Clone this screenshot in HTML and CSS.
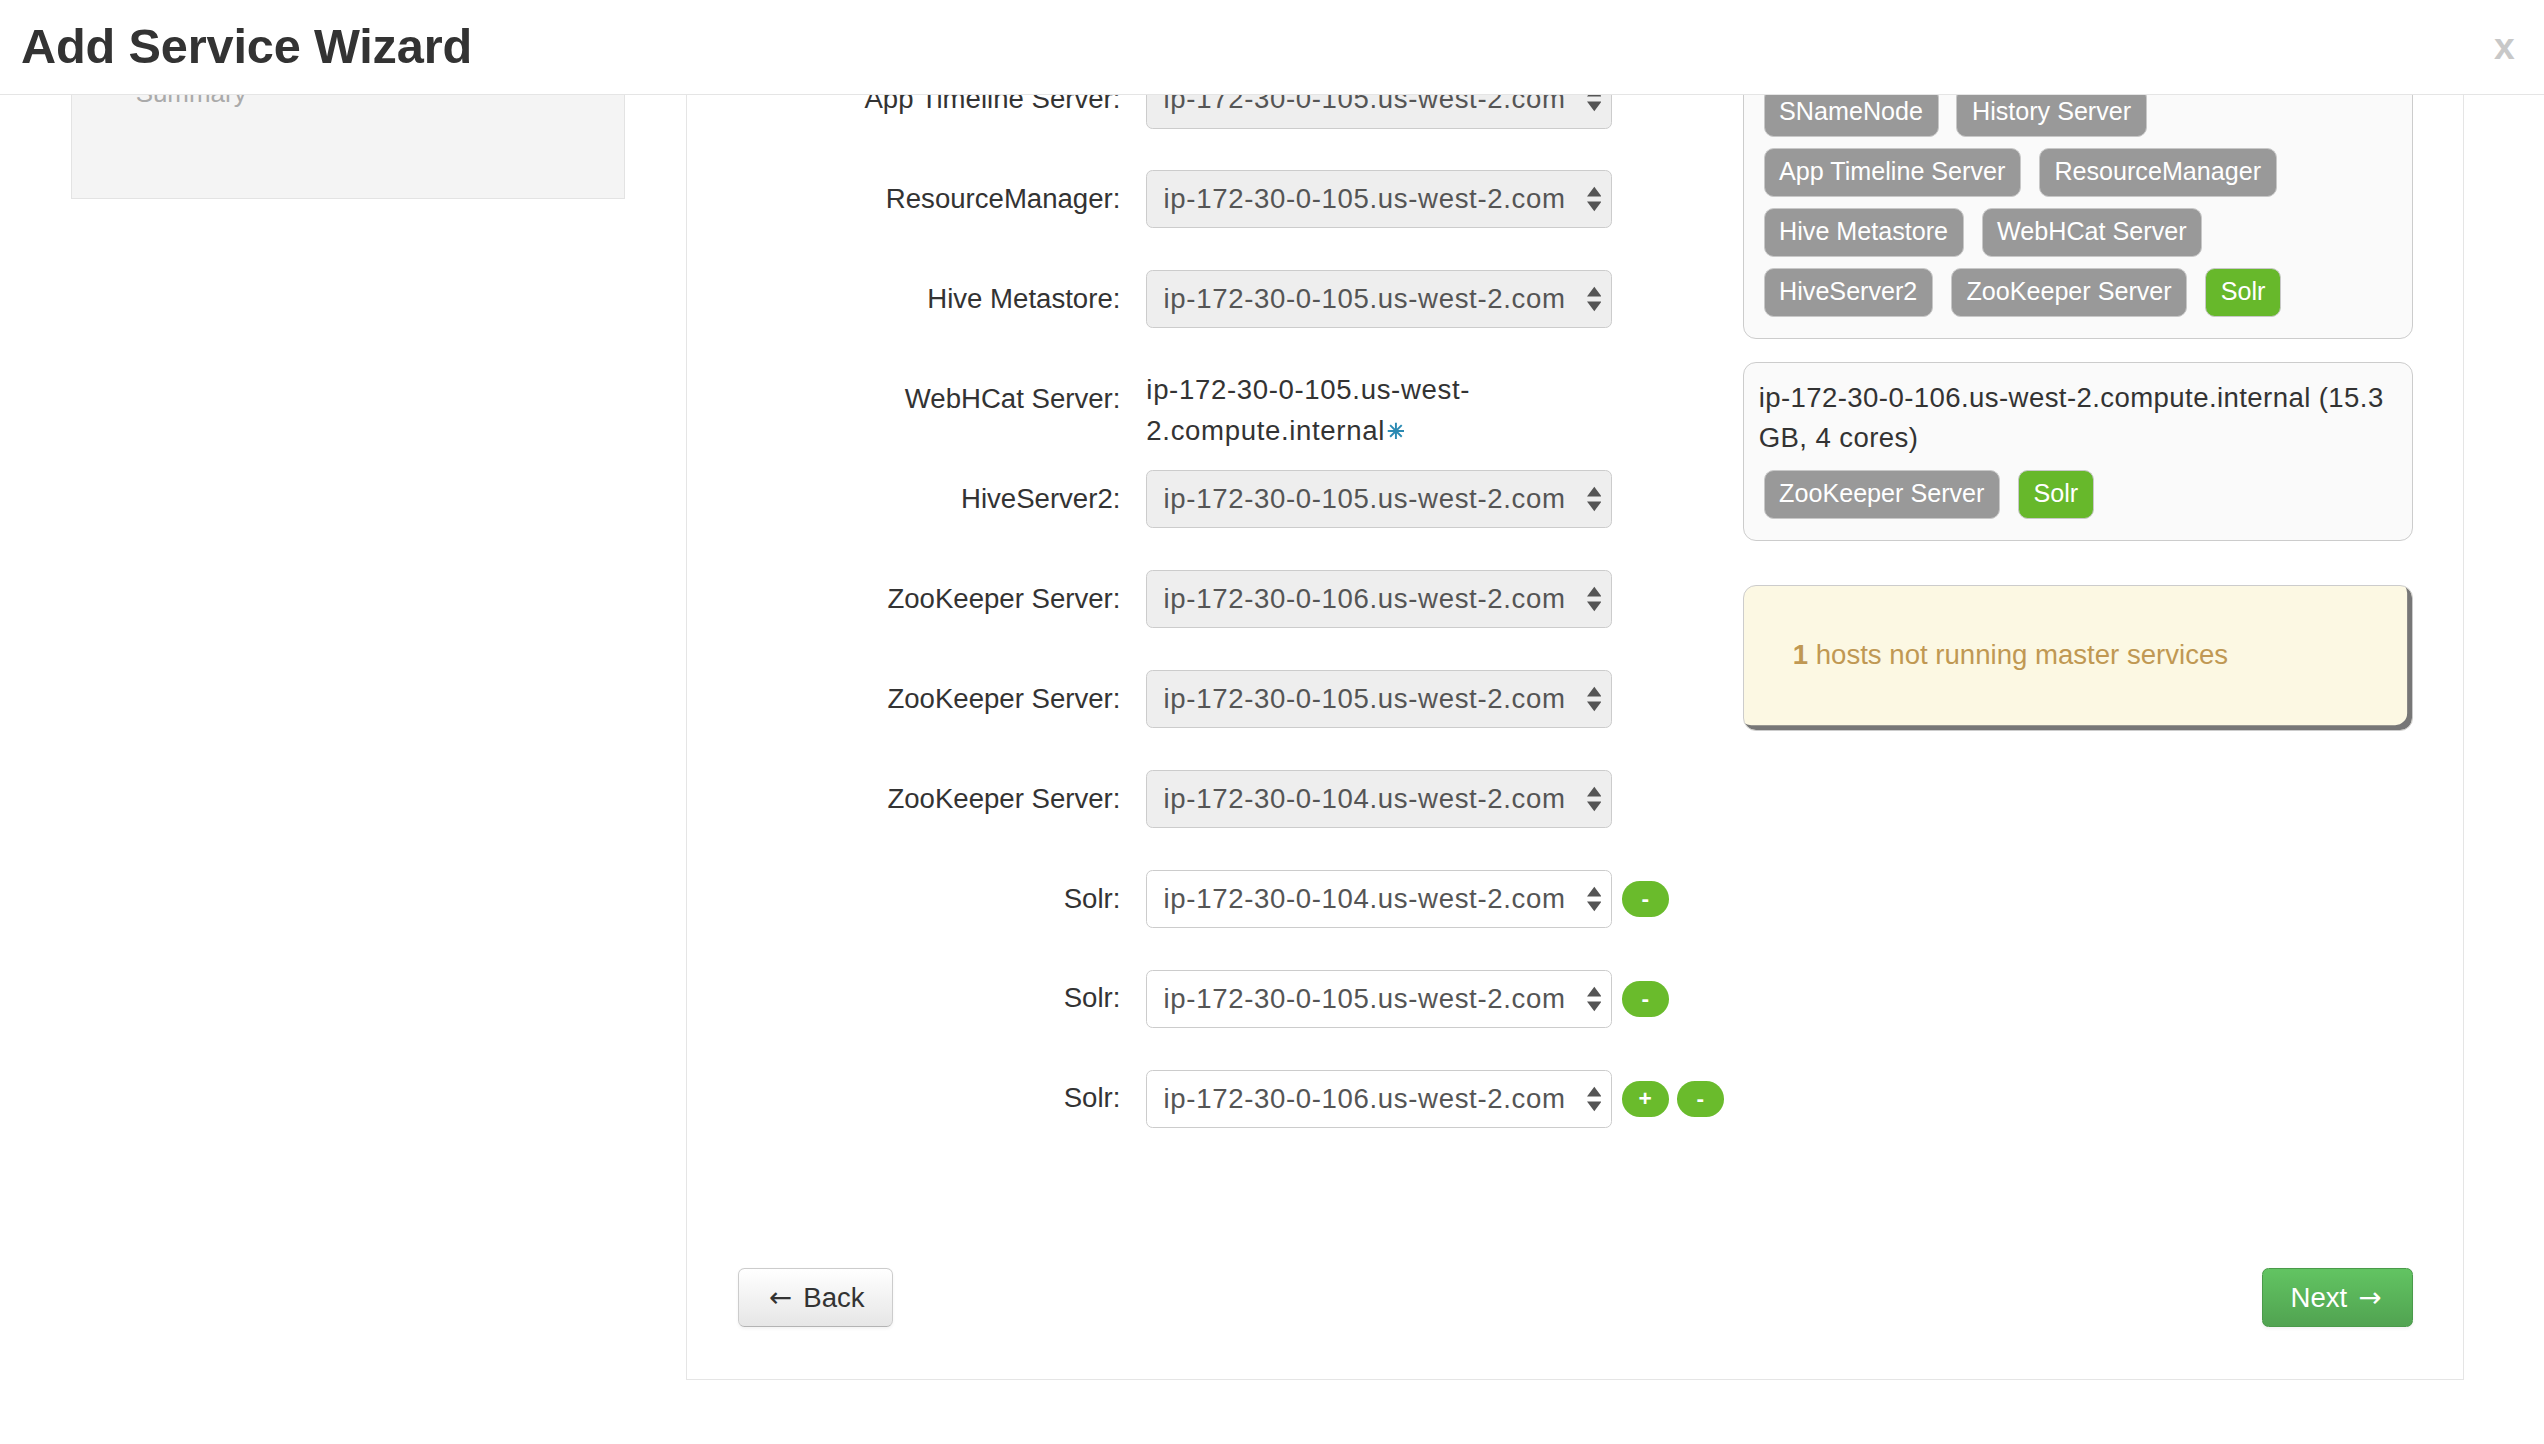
FILE: index.html
```html
<!DOCTYPE html>
<html lang="en">
<head>
    <meta charset="UTF-8">
    <meta name="viewport" content="width=device-width, initial-scale=1.0">
    <title>Add Service Wizard</title>
    <link rel="stylesheet" href="styles.css">
</head>
<body>
    <div class="modal">
        <div class="modal-header">
            <h3>Add Service Wizard</h3>
            <span class="close">x</span>
        </div>
        <div class="modal-body">
            <div class="wizard">
                <div class="wizard-nav">
                    <ul>
                        <li>Choose Services</li>
                        <li>Assign Masters</li>
                        <li>Assign Slaves and Clients</li>
                        <li>Customize Services</li>
                        <li>Review</li>
                        <li>Install, Start and Test</li>
                        <li>Configure</li>
                        <li>Summary</li>
                    </ul>
                </div>

                <div class="wizard-step">
                    <div class="step-cols">
                        <div class="masters">
                            <div class="row">
                                <label>NameNode:</label>
                                <div class="select"><span>ip-172-30-0-104.us-west-2.com</span><svg class="caret" viewBox="0 0 9 16"><path d="M0 6.5L4.5 0.5L9 6.5Z M0 9.5L4.5 15.5L9 9.5Z"/></svg></div>
                            </div>
                            <div class="row">
                                <label>SNameNode:</label>
                                <div class="select"><span>ip-172-30-0-105.us-west-2.com</span><svg class="caret" viewBox="0 0 9 16"><path d="M0 6.5L4.5 0.5L9 6.5Z M0 9.5L4.5 15.5L9 9.5Z"/></svg></div>
                            </div>
                            <div class="row">
                                <label>History Server:</label>
                                <div class="select"><span>ip-172-30-0-105.us-west-2.com</span><svg class="caret" viewBox="0 0 9 16"><path d="M0 6.5L4.5 0.5L9 6.5Z M0 9.5L4.5 15.5L9 9.5Z"/></svg></div>
                            </div>
                            <div class="row">
                                <label>App Timeline Server:</label>
                                <div class="select"><span>ip-172-30-0-105.us-west-2.com</span><svg class="caret" viewBox="0 0 9 16"><path d="M0 6.5L4.5 0.5L9 6.5Z M0 9.5L4.5 15.5L9 9.5Z"/></svg></div>
                            </div>
                            <div class="row">
                                <label>ResourceManager:</label>
                                <div class="select"><span>ip-172-30-0-105.us-west-2.com</span><svg class="caret" viewBox="0 0 9 16"><path d="M0 6.5L4.5 0.5L9 6.5Z M0 9.5L4.5 15.5L9 9.5Z"/></svg></div>
                            </div>
                            <div class="row">
                                <label>Hive Metastore:</label>
                                <div class="select"><span>ip-172-30-0-105.us-west-2.com</span><svg class="caret" viewBox="0 0 9 16"><path d="M0 6.5L4.5 0.5L9 6.5Z M0 9.5L4.5 15.5L9 9.5Z"/></svg></div>
                            </div>
                            <div class="row">
                                <label>WebHCat Server:</label>
                                <div class="static-host">ip-172-30-0-105.us-west-2.compute.internal<svg class="asterisk" viewBox="0 0 12 12"><path d="M6 0.5V11.5M0.5 6H11.5M2.1 2.1L9.9 9.9M9.9 2.1L2.1 9.9"/></svg></div>
                            </div>
                            <div class="row">
                                <label>HiveServer2:</label>
                                <div class="select"><span>ip-172-30-0-105.us-west-2.com</span><svg class="caret" viewBox="0 0 9 16"><path d="M0 6.5L4.5 0.5L9 6.5Z M0 9.5L4.5 15.5L9 9.5Z"/></svg></div>
                            </div>
                            <div class="row">
                                <label>ZooKeeper Server:</label>
                                <div class="select"><span>ip-172-30-0-106.us-west-2.com</span><svg class="caret" viewBox="0 0 9 16"><path d="M0 6.5L4.5 0.5L9 6.5Z M0 9.5L4.5 15.5L9 9.5Z"/></svg></div>
                            </div>
                            <div class="row">
                                <label>ZooKeeper Server:</label>
                                <div class="select"><span>ip-172-30-0-105.us-west-2.com</span><svg class="caret" viewBox="0 0 9 16"><path d="M0 6.5L4.5 0.5L9 6.5Z M0 9.5L4.5 15.5L9 9.5Z"/></svg></div>
                            </div>
                            <div class="row">
                                <label>ZooKeeper Server:</label>
                                <div class="select"><span>ip-172-30-0-104.us-west-2.com</span><svg class="caret" viewBox="0 0 9 16"><path d="M0 6.5L4.5 0.5L9 6.5Z M0 9.5L4.5 15.5L9 9.5Z"/></svg></div>
                            </div>
                            <div class="row">
                                <label>Solr:</label>
                                <div class="select editable"><span>ip-172-30-0-104.us-west-2.com</span><svg class="caret" viewBox="0 0 9 16"><path d="M0 6.5L4.5 0.5L9 6.5Z M0 9.5L4.5 15.5L9 9.5Z"/></svg></div>
                                <button class="btn-mini">-</button>
                            </div>
                            <div class="row">
                                <label>Solr:</label>
                                <div class="select editable"><span>ip-172-30-0-105.us-west-2.com</span><svg class="caret" viewBox="0 0 9 16"><path d="M0 6.5L4.5 0.5L9 6.5Z M0 9.5L4.5 15.5L9 9.5Z"/></svg></div>
                                <button class="btn-mini">-</button>
                            </div>
                            <div class="row">
                                <label>Solr:</label>
                                <div class="select editable"><span>ip-172-30-0-106.us-west-2.com</span><svg class="caret" viewBox="0 0 9 16"><path d="M0 6.5L4.5 0.5L9 6.5Z M0 9.5L4.5 15.5L9 9.5Z"/></svg></div>
                                <button class="btn-mini">+</button>
                                <button class="btn-mini">-</button>
                            </div>
                        </div>

                        <div class="hosts">
                            <div class="host">
                                <div class="host-name">ip-172-30-0-104.us-west-2.compute.internal (15.3 GB, 4 cores)</div>
                                <div class="badges">
                                    <span class="badge">NameNode</span>
                                    <span class="badge">ZooKeeper Server</span>
                                    <span class="badge new">Solr</span>
                                </div>
                            </div>
                            <div class="host">
                                <div class="host-name">ip-172-30-0-105.us-west-2.compute.internal (15.3 GB, 4 cores)</div>
                                <div class="badges">
                                    <span class="badge">SNameNode</span>
                                    <span class="badge">History Server</span>
                                </div>
                                <div class="badges">
                                    <span class="badge">App Timeline Server</span>
                                    <span class="badge">ResourceManager</span>
                                </div>
                                <div class="badges">
                                    <span class="badge">Hive Metastore</span>
                                    <span class="badge">WebHCat Server</span>
                                </div>
                                <div class="badges">
                                    <span class="badge">HiveServer2</span>
                                    <span class="badge">ZooKeeper Server</span>
                                    <span class="badge new">Solr</span>
                                </div>
                            </div>
                            <div class="host">
                                <div class="host-name">ip-172-30-0-106.us-west-2.compute.internal (15.3 GB, 4 cores)</div>
                                <div class="badges">
                                    <span class="badge">ZooKeeper Server</span>
                                    <span class="badge new">Solr</span>
                                </div>
                            </div>
                            <div class="alert"><b>1</b> hosts not running master services</div>
                        </div>
                    </div>

                    <div class="step-footer">
                        <button class="btn"><span class="arrow">&larr;</span> Back</button>
                        <button class="btn btn-success">Next <span class="arrow">&rarr;</span></button>
                    </div>
                </div>
            </div>
        </div>
    </div>
</body>
</html>
```

FILE: styles.css
```css
html {
    background: #fff;
}
body {
    margin: 0;
    font-family: "Liberation Sans", Arial, sans-serif;
    color: #333;
    background: #fff;
    zoom: 1.6224;
}
.modal {
    height: 890px;
    display: flex;
    flex-direction: column;
    overflow: hidden;
}
.modal-header {
    height: 58px;
    flex-shrink: 0;
    border-bottom: 1px solid #e5e5e5;
    display: flex;
    align-items: center;
    justify-content: space-between;
    padding: 0 18px 0 13px;
}
.modal-header h3 {
    margin: 0 0 1px;
    font-size: 30px;
    font-weight: bold;
    color: #333;
    letter-spacing: -0.1px;
}
.close {
    font-size: 23px;
    font-weight: bold;
    color: #c8c8c8;
    line-height: 1;
}
.modal-body {
    flex: 1;
    overflow: hidden;
}
/* the body is scrolled down, the top of the step sits under the header */
.wizard {
    display: flex;
    align-items: flex-start;
    margin-top: -220.8px;
}
.wizard-nav {
    width: 341px;
    box-sizing: border-box;
    margin-left: 44px;
    background: #f4f4f4;
    border: 1px solid #e3e3e3;
    padding: 23.8px 0 52px;
}
.wizard-nav ul {
    list-style: none;
    margin: 0;
    padding: 0;
}
.wizard-nav li {
    height: 26px;
    line-height: 26px;
    padding-left: 39px;
    font-size: 16px;
    color: #aaa;
}
.wizard-step {
    width: 1096px;
    box-sizing: border-box;
    margin-left: 38px;
    border: 1px solid #e5e5e5;
    padding: 20px 31px 32px;
}
.step-cols {
    display: flex;
    align-items: flex-start;
}
.masters {
    flex: 1;
}
.row {
    display: flex;
    align-items: center;
    height: 36px;
    margin-bottom: 25.6px;
}
.row label {
    width: 236px;
    margin-right: 16px;
    text-align: right;
    font-size: 17px;
    line-height: 25px;
    color: #333;
}
.select {
    width: 287px;
    height: 36px;
    box-sizing: border-box;
    display: flex;
    align-items: center;
    justify-content: space-between;
    padding: 0 6px 0 10px;
    border: 1px solid #ccc;
    border-radius: 4px;
    background: #eee;
    color: #555;
    font-size: 17px;
    letter-spacing: 0.4px;
}
.select.editable {
    background: #fff;
}
.caret {
    width: 9px;
    height: 16px;
    fill: #555;
}
.static-host {
    align-self: flex-start;
    width: 287px;
    font-size: 17px;
    line-height: 25px;
    letter-spacing: 0.4px;
    color: #333;
}
.asterisk {
    width: 11px;
    height: 11px;
    margin-left: 1px;
    stroke: #2b8ab3;
    stroke-width: 1.3;
    fill: none;
}
.btn-mini {
    width: 29px;
    height: 22px;
    margin-left: 6px;
    padding: 0;
    border: none;
    border-radius: 11px;
    background: #6abb2c;
    color: #fff;
    font-family: inherit;
    font-size: 14px;
    font-weight: bold;
    line-height: 22px;
}
.btn-mini + .btn-mini {
    margin-left: 5px;
}
.hosts {
    width: 413px;
    margin-top: 4px;
}
.host {
    background: #fafafa;
    border: 1px solid #ccc;
    border-radius: 8px;
    padding: 9.5px 12px 13px 9px;
    margin-bottom: 14px;
}
.host-name {
    font-size: 17px;
    line-height: 25px;
    letter-spacing: 0.25px;
    color: #333;
    margin-bottom: 3.5px;
}
.badges {
    display: flex;
    gap: 11px;
    margin: 7px 0 0 3px;
}
.badge {
    height: 30px;
    box-sizing: border-box;
    line-height: 28px;
    padding: 0 9px;
    border: 1px solid #c8c8c8;
    border-radius: 6px;
    background: #999;
    color: #fff;
    font-size: 15.5px;
    white-space: nowrap;
}
.badge.new {
    background: #67b82b;
}
.alert {
    margin-top: 27px;
    background: #fcf8e3;
    border: 1px solid #ccc;
    border-radius: 8px;
    box-shadow: inset -3px -3px 0 #777;
    padding: 30px 30px 34px;
    font-size: 17px;
    line-height: 25px;
    color: #c09853;
}
.step-footer {
    display: flex;
    justify-content: space-between;
    margin-top: 61px;
}
.btn {
    height: 36px;
    padding: 0 17px;
    font-family: inherit;
    font-size: 17px;
    color: #333;
    border: 1px solid #ccc;
    border-bottom-color: #b3b3b3;
    border-radius: 4px;
    background: linear-gradient(#fff, #e6e6e6);
    box-shadow: 0 1px 2px rgba(0, 0, 0, 0.05);
}
.btn .arrow {
    font-family: "DejaVu Sans", sans-serif;
    font-size: 17px;
    margin: 0 2px;
}
.btn-success {
    color: #fff;
    border-color: #4a9a4a;
    background: linear-gradient(#62c462, #51a351);
}
```
